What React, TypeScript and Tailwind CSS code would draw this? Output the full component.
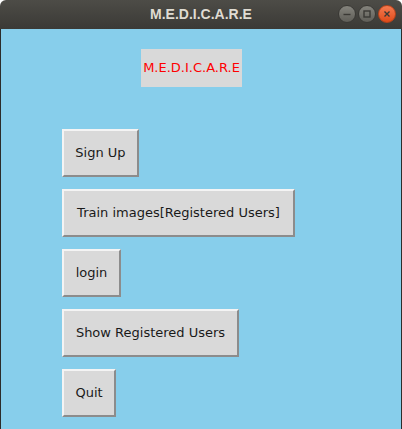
const buttons = [
  { label: 'Sign Up', w: 'w-[77px]' },
  { label: 'Train images[Registered Users]', w: 'w-[233px]' },
  { label: 'login', w: 'w-[59px]' },
  { label: 'Show Registered Users', w: 'w-[177px]' },
  { label: 'Quit', w: 'w-[54px]' },
]

function TitleButton({ kind }: { kind: 'min' | 'max' | 'close' }) {
  const isClose = kind === 'close'
  return (
    <div
      className={
        isClose
          ? 'flex h-[18px] w-[18px] items-center justify-center rounded-full border border-[#b8421a] bg-gradient-to-b from-[#f47a4f] to-[#df4a16]'
          : 'flex h-[18px] w-[18px] items-center justify-center rounded-full border border-[#3a3935] bg-gradient-to-b from-[#85847d] to-[#5f5e58]'
      }
    >
      <svg width="10" height="10" viewBox="0 0 10 10" fill="none" stroke="#3a3935" strokeWidth="1.4">
        {kind === 'min' && <path d="M1.5 5.5h7" />}
        {kind === 'max' && <rect x="2" y="2" width="6" height="6" />}
        {kind === 'close' && <path d="M2.5 2.5l5 5M7.5 2.5l-5 5" />}
      </svg>
    </div>
  )
}

export default function App() {
  return (
    <div className="h-[429px] w-[402px] overflow-hidden bg-white font-['DejaVu_Sans',sans-serif]">
      <div className="relative flex h-[29px] items-center justify-center rounded-t-[6px] bg-gradient-to-b from-[#4d4c47] to-[#3b3a36]">
        <span className="font-['Liberation_Sans',sans-serif] text-[14px] font-bold text-[#dfdbd2]">
          M.E.D.I.C.A.R.E
        </span>
        <div className="absolute right-[6px] top-[5px] flex gap-[2px]">
          <TitleButton kind="min" />
          <TitleButton kind="max" />
          <TitleButton kind="close" />
        </div>
      </div>

      <div className="flex h-[400px] flex-col border-x border-[#2c2c2a] bg-[#87ceeb] pl-[61px]">
        <div className="ml-[79px] mt-[20px] flex h-[38px] w-[101px] items-center justify-center bg-[#d9d9d9] text-[13px] text-[#ff0000]">
          M.E.D.I.C.A.R.E
        </div>

        <div className="mt-[42px] flex flex-col items-start gap-[12px]">
          {buttons.map((b) => (
            <button
              key={b.label}
              className={`${b.w} h-[48px] whitespace-nowrap border-2 border-b-[#8c8c8c] border-l-[#f4f4f4] border-r-[#8c8c8c] border-t-[#f4f4f4] bg-[#d9d9d9] text-center text-[13px] text-[#1a1a1a]`}
            >
              {b.label}
            </button>
          ))}
        </div>
      </div>
    </div>
  )
}
